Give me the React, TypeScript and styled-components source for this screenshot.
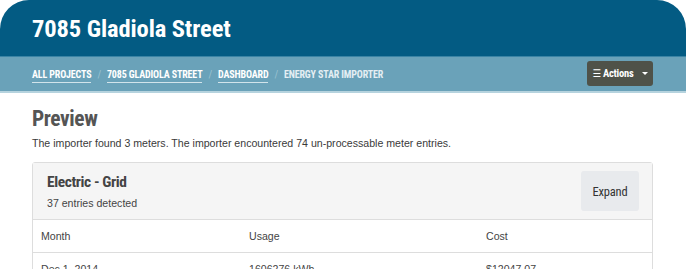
import React from "react";
import styled, { createGlobalStyle } from "styled-components";

const GlobalStyle = createGlobalStyle`
    html, body {
        margin: 0;
        padding: 0;
        background: #ffffff;
    }
    body {
        font-family: "Liberation Sans", Arial, sans-serif;
        color: #333333;
    }
`;

const condensed = `"Roboto Condensed", "DejaVu Sans", sans-serif`;

const Page = styled.div`
    width: 686px;
    height: 269px;
    overflow: hidden;
    background: #ffffff;
`;

const Header = styled.header`
    height: 56px;
    background-color: #035b83;
    border-radius: 29px 29px 0 0;
    display: flex;
    align-items: center;
    padding: 0 32px;
`;

const Title = styled.h1`
    margin: 0;
    font-family: ${condensed};
    font-stretch: condensed;
    font-weight: 700;
    font-size: 24.5px;
    letter-spacing: -0.1px;
    color: #ffffff;
`;

const CrumbBar = styled.nav`
    height: 34px;
    background-color: #6aa2b9;
    border-top: 1px solid #3a84a5;
    border-bottom: 2px solid #b6d3de;
    display: flex;
    align-items: center;
    justify-content: space-between;
    padding: 0 33px 0 32px;
`;

const Crumbs = styled.ol`
    list-style: none;
    margin: 0;
    padding: 0;
    display: flex;
    align-items: center;
    gap: 6px;
    font-family: ${condensed};
    font-stretch: condensed;
    font-weight: 700;
    font-size: 10px;
    letter-spacing: -0.15px;
    text-transform: uppercase;
    white-space: nowrap;
`;

const Crumb = styled.li<{ $current?: boolean }>`
    color: ${p => (p.$current ? "#e4eef3" : "#ffffff")};
    padding-top: 3px;
    padding-bottom: 2px;
    border-bottom: 1px solid ${p => (p.$current ? "transparent" : "#d2e4eb")};
`;

const Sep = styled.li`
    color: #9cc2d1;
    font-weight: 400;
`;

const ActionsButton = styled.button`
    height: 25px;
    width: 66px;
    margin-top: -1px;
    border: none;
    border-radius: 3px;
    background-color: #4f5249;
    color: #ffffff;
    font-family: ${condensed};
    font-stretch: condensed;
    font-weight: 700;
    font-size: 10.5px;
    letter-spacing: -0.2px;
    white-space: nowrap;
    display: flex;
    align-items: center;
    justify-content: center;
    gap: 3px;
    padding: 0;
`;

const Caret = styled.span`
    width: 0;
    height: 0;
    margin-left: 5px;
    border-left: 3px solid transparent;
    border-right: 3px solid transparent;
    border-top: 3px solid #ffffff;
`;

const Content = styled.main`
    padding: 12px 33px 0 32px;
`;

const PageHeading = styled.h2`
    margin: 0;
    font-family: ${condensed};
    font-stretch: condensed;
    font-weight: 700;
    font-size: 21.5px;
    letter-spacing: -0.4px;
    line-height: 28px;
    color: #555555;
`;

const Intro = styled.p`
    margin: 2px 0 11px;
    font-size: 10.6px;
    line-height: 16px;
    color: #3a3a3a;
`;

const Card = styled.section`
    border: 1px solid #dddddd;
    border-radius: 3px;
`;

const CardHeader = styled.div`
    height: 56px;
    background-color: #f5f5f5;
    border-bottom: 1px solid #dddddd;
    display: flex;
    align-items: center;
    justify-content: space-between;
    padding: 0 13px 0 14px;
`;

const MeterName = styled.h3`
    margin: 0;
    font-family: ${condensed};
    font-stretch: condensed;
    font-weight: 700;
    font-size: 15.5px;
    letter-spacing: -0.4px;
    line-height: 20px;
    color: #444444;
`;

const MeterCount = styled.div`
    margin-top: 5px;
    font-size: 10.6px;
    line-height: 13px;
    color: #444444;
`;

const ExpandButton = styled.button`
    width: 58px;
    height: 40px;
    border: none;
    border-radius: 3px;
    background-color: #e8eaed;
    color: #333333;
    font-family: ${condensed};
    font-stretch: condensed;
    font-size: 12.5px;
    letter-spacing: -0.2px;
    padding: 0;
`;

const Table = styled.table`
    width: 100%;
    border-collapse: collapse;
    table-layout: fixed;
    font-size: 10.6px;
    color: #444444;
`;

const Th = styled.th<{ $width?: number }>`
    width: ${p => (p.$width ? `${p.$width}px` : "auto")};
    height: 32px;
    padding: 0 8px;
    text-align: left;
    font-weight: 400;
    border-bottom: 1px solid #dddddd;
`;

const Td = styled.td`
    height: 32px;
    padding: 0 8px;
`;

const rows = [{ month: "Dec 1, 2014", usage: "1606276 kWh", cost: "$12047.07" }];

export default function App() {
    return (
        <Page>
            <GlobalStyle />
            <Header>
                <Title>7085 Gladiola Street</Title>
            </Header>
            <CrumbBar>
                <Crumbs>
                    <Crumb>All Projects</Crumb>
                    <Sep>/</Sep>
                    <Crumb>7085 Gladiola Street</Crumb>
                    <Sep>/</Sep>
                    <Crumb>Dashboard</Crumb>
                    <Sep>/</Sep>
                    <Crumb $current>Energy Star Importer</Crumb>
                </Crumbs>
                <ActionsButton>
                    <span>☰ Actions</span>
                    <Caret />
                </ActionsButton>
            </CrumbBar>
            <Content>
                <PageHeading>Preview</PageHeading>
                <Intro>The importer found 3 meters. The importer encountered 74 un-processable meter entries.</Intro>
                <Card>
                    <CardHeader>
                        <div>
                            <MeterName>Electric - Grid</MeterName>
                            <MeterCount>37 entries detected</MeterCount>
                        </div>
                        <ExpandButton>Expand</ExpandButton>
                    </CardHeader>
                    <Table>
                        <thead>
                            <tr>
                                <Th $width={192}>Month</Th>
                                <Th $width={221}>Usage</Th>
                                <Th>Cost</Th>
                            </tr>
                        </thead>
                        <tbody>
                            {rows.map(r => (
                                <tr key={r.month}>
                                    <Td>{r.month}</Td>
                                    <Td>{r.usage}</Td>
                                    <Td>{r.cost}</Td>
                                </tr>
                            ))}
                        </tbody>
                    </Table>
                </Card>
            </Content>
        </Page>
    );
}
